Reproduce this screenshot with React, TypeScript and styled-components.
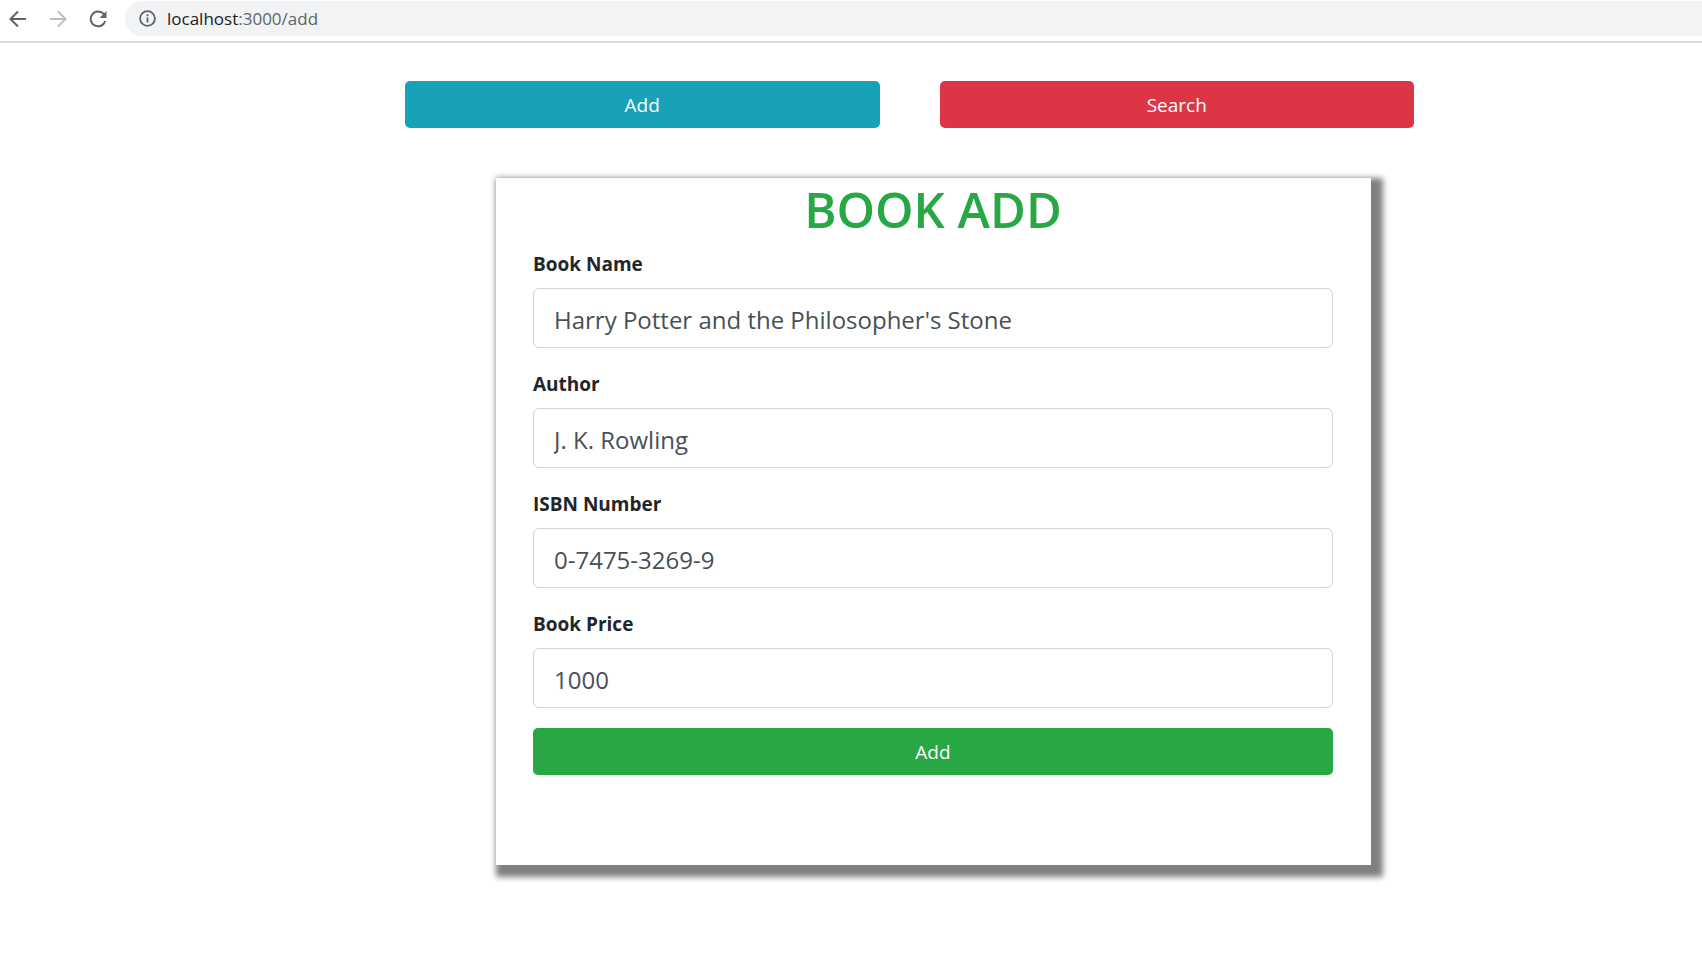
import React from "react";
import styled, { createGlobalStyle } from "styled-components";

const GlobalStyle = createGlobalStyle`
  *, *::before, *::after { box-sizing: border-box; }
  body {
    margin: 0;
    background: #fff;
    color: #212529;
    font-family: "Open Sans", "Noto Sans", sans-serif;
    font-size: 19px;
    line-height: 30px;
  }
`;

const BrowserBar = styled.header`
  display: flex;
  align-items: flex-start;
  height: 43px;
  padding: 1px 0 0 5px;
  border-bottom: 2px solid #dadada;
`;

const BrowserButton = styled.button`
  display: flex;
  align-items: center;
  justify-content: center;
  flex: none;
  width: 26px;
  height: 35px;
  margin-right: 14px;
  padding: 0;
  border: 0;
  background: none;
  color: #5f6368;

  &:disabled { color: #bcbec1; }
`;

const AddressBar = styled.div`
  display: flex;
  align-items: center;
  flex: 1;
  gap: 11px;
  height: 35px;
  padding-left: 14px;
  border-radius: 18px 0 0 18px;
  background: #f1f3f4;
  color: #5f6368;
`;

const Address = styled.span`
  font-size: 17px;
  line-height: 24px;
`;

const Host = styled.span`
  color: #202124;
`;

const Page = styled.main`
  padding: 38px 0 90px;
`;

const Nav = styled.nav`
  display: grid;
  grid-template-columns: 1fr 1fr;
  gap: 60px;
  max-width: 1126px;
  margin: 0 auto 50px;
  padding-left: 117px;
`;

const tones = { info: "#17a2b8", danger: "#dc3545", success: "#28a745" };

const Button = styled.button<{ $tone: keyof typeof tones }>`
  display: block;
  width: 100%;
  padding: 9px 15px 8px;
  border: 0;
  border-radius: 5px;
  background: ${({ $tone }) => tones[$tone]};
  color: #fff;
  font: inherit;
  cursor: pointer;
`;

const CardArea = styled.div`
  max-width: 1040px;
  margin: 0 auto;
  padding-left: 165px;
`;

const Card = styled.form`
  padding: 0 38px 90px 37px;
  background: #fff;
  box-shadow: 6px 6px 6px 6px #808080;
`;

const Title = styled.h1`
  margin: 0 0 9px;
  color: #28a745;
  font-size: 49px;
  font-weight: 600;
  line-height: 62px;
  text-align: center;
`;

const Field = styled.div`
  margin-bottom: 21px;

  &:last-of-type { margin-bottom: 20px; }
`;

const Label = styled.label`
  display: block;
  margin-bottom: 9px;
  font-weight: 700;
`;

const Input = styled.input`
  display: block;
  width: 100%;
  height: 60px;
  padding: 12px 20px 10px;
  border: 1px solid #ced4da;
  border-radius: 6px;
  background: #fff;
  color: #495057;
  font: inherit;
  font-size: 24px;
`;

const fields = [
  { id: "name", label: "Book Name", value: "Harry Potter and the Philosopher's Stone" },
  { id: "author", label: "Author", value: "J. K. Rowling" },
  { id: "isbn", label: "ISBN Number", value: "0-7475-3269-9" },
  { id: "price", label: "Book Price", value: "1000" },
];

const BackIcon = () => (
  <svg width="18" height="18" viewBox="0 0 18 18" fill="none" stroke="currentColor" strokeWidth="2">
    <path d="M17 9H2M9 1.5 1.5 9 9 16.5" />
  </svg>
);

const ForwardIcon = () => (
  <svg width="18" height="18" viewBox="0 0 18 18" fill="none" stroke="currentColor" strokeWidth="2">
    <path d="M1 9h15M9 1.5 16.5 9 9 16.5" />
  </svg>
);

const ReloadIcon = () => (
  <svg width="18" height="18" viewBox="0 0 18 18">
    <path d="M14.8 4.2A7.4 7.4 0 1 0 16.2 11" fill="none" stroke="currentColor" strokeWidth="2" />
    <path d="M17.5 1v7h-7z" fill="currentColor" />
  </svg>
);

const InfoIcon = () => (
  <svg width="17" height="17" viewBox="0 0 17 17">
    <circle cx="8.5" cy="8.5" r="7.4" fill="none" stroke="currentColor" strokeWidth="1.8" />
    <path d="M7.6 7.5h1.8v5H7.6zM7.6 4.3h1.8v1.9H7.6z" fill="currentColor" />
  </svg>
);

export default function App() {
  return (
    <>
      <GlobalStyle />
      <BrowserBar>
        <BrowserButton type="button" aria-label="Back"><BackIcon /></BrowserButton>
        <BrowserButton type="button" aria-label="Forward" disabled><ForwardIcon /></BrowserButton>
        <BrowserButton type="button" aria-label="Reload"><ReloadIcon /></BrowserButton>
        <AddressBar>
          <InfoIcon />
          <Address><Host>localhost</Host>:3000/add</Address>
        </AddressBar>
      </BrowserBar>
      <Page>
        <Nav>
          <Button type="button" $tone="info">Add</Button>
          <Button type="button" $tone="danger">Search</Button>
        </Nav>
        <CardArea>
          <Card onSubmit={(event) => event.preventDefault()}>
            <Title>BOOK ADD</Title>
            {fields.map(({ id, label, value }) => (
              <Field key={id}>
                <Label htmlFor={id}>{label}</Label>
                <Input id={id} type="text" defaultValue={value} />
              </Field>
            ))}
            <Button type="submit" $tone="success">Add</Button>
          </Card>
        </CardArea>
      </Page>
    </>
  );
}
